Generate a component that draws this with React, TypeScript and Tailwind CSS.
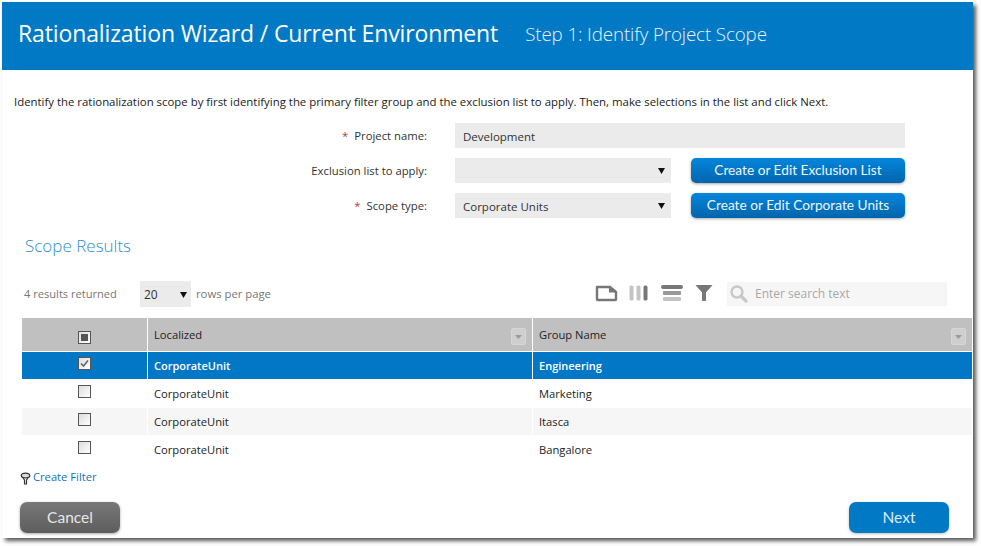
const seg = '"Open Sans", "Noto Sans", sans-serif';

function Caret() {
  return (
    <svg width="7" height="7" viewBox="0 0 7 7" className="shrink-0">
      <path d="M0 1h7L3.5 7z" fill="#111" />
    </svg>
  );
}

function Box({ checked, mixed }: { checked?: boolean; mixed?: boolean }) {
  return (
    <div className="w-[13px] h-[13px] border border-[#555] bg-gradient-to-br from-[#dcdcdc] to-white flex items-center justify-center">
      {mixed && <div className="w-[7px] h-[7px] bg-[#555]" />}
      {checked && (
        <svg width="9" height="9" viewBox="0 0 9 9">
          <path d="M1 4.5l2.5 2.5L8 1.5" fill="none" stroke="#666" strokeWidth="1.6" />
        </svg>
      )}
    </div>
  );
}

function SortBtn() {
  return (
    <div className="w-[15px] h-[17px] rounded-[2px] border border-[#d6d6d6] bg-[#cfcfcf] flex items-center justify-center">
      <svg width="7" height="4" viewBox="0 0 7 4">
        <path d="M0 0h7L3.5 4z" fill="#9a9a9a" />
      </svg>
    </div>
  );
}

const rows = [
  { g: "Engineering", h: "h-[27px]", pt: "pt-[5px]", tp: "pt-[1px]", bg: "bg-[#0277c6] text-white font-semibold text-[11px]" },
  { g: "Marketing", h: "h-[29px]", pt: "pt-[6px]", tp: "pt-[1px]", bg: "bg-white text-[#222]" },
  { g: "Itasca", h: "h-[27px]", pt: "pt-[5px]", tp: "pt-[1px]", bg: "bg-[#f6f6f6] text-[#222]" },
  { g: "Bangalore", h: "h-[28px]", pt: "pt-[6px]", tp: "pt-[2px]", bg: "bg-white text-[#222]" },
];

function FormRow({ label, req, children, cls }: { label: string; req?: boolean; children: React.ReactNode; cls: string }) {
  return (
    <div className={`flex items-center ${cls}`}>
      <div className="w-[425px] text-right text-[11.3px] text-[#333] pt-[1px]">
        {req && <span className="text-[#a8404a] mr-[6px]">*</span>}
        {label}
      </div>
      <div className="ml-[28px] flex items-center">{children}</div>
    </div>
  );
}

function Select({ value }: { value?: string }) {
  return (
    <div className="w-[216px] h-[25px] bg-[#ebebeb] flex items-center justify-between pl-[8px] pr-[6px] text-[11.5px] text-[#333]">
      <span className="pt-[2px]">{value}</span>
      <Caret />
    </div>
  );
}

function BlueBtn({ children }: { children: React.ReactNode }) {
  return (
    <div
      className="ml-[20px] w-[214px] h-[25px] pb-[1px] rounded-[5px] bg-gradient-to-b from-[#0586dc] to-[#0165ad] text-[#eef6fc] text-[13.7px] flex items-center justify-center shadow-[0_1px_3px_rgba(0,0,0,0.35)]"
      style={{ fontFamily: "Lato, sans-serif" }}
    >
      {children}
    </div>
  );
}

export default function App() {
  return (
    <div className="w-[981px] h-[546px] bg-white pl-[2px] pt-[2px] overflow-hidden" style={{ fontFamily: seg }}>
      <div className="w-[971px] h-[536px] bg-white shadow-[3px_3px_4px_rgba(0,0,0,0.65)] flex flex-col">
        <div className="h-[68px] bg-[#0279c4] flex items-center text-white pl-[16px] pb-[5px] shrink-0">
          <div className="text-[23px] tracking-[-0.13px]">Rationalization Wizard / Current Environment</div>
          <div className="ml-[27px] text-[18.8px] font-light text-[#e8f3fa] tracking-[-0.13px] pt-[2px]">Step 1: Identify Project Scope</div>
        </div>

        <div className="pl-[12px] pt-[24px] text-[11.4px] leading-[16px] text-[#222]">
          Identify the rationalization scope by first identifying the primary filter group and the exclusion list to apply. Then, make selections in the list and click Next.
        </div>

        <FormRow label="Project name:" req cls="mt-[13px]">
          <div className="w-[450px] h-[25px] bg-[#ebebeb] flex items-center pl-[8px] text-[11.5px] text-[#333]">
            <span className="pt-[2px]">Development</span>
          </div>
        </FormRow>
        <FormRow label="Exclusion list to apply:" cls="mt-[10px]">
          <Select />
          <BlueBtn>Create or Edit Exclusion List</BlueBtn>
        </FormRow>
        <FormRow label="Scope type:" req cls="mt-[10px]">
          <Select value="Corporate Units" />
          <BlueBtn>Create or Edit Corporate Units</BlueBtn>
        </FormRow>

        <div className="pl-[23px] mt-[16px] text-[17px] leading-[24px] font-light text-[#2f8fd0]">Scope Results</div>

        <div className="flex items-center h-[26px] mt-[23px] pl-[22px] pr-[26px]">
          <div className="text-[11.1px] text-[#777] w-[116px]">4 results returned</div>
          <div className="w-[51px] h-[26px] bg-[#ebebeb] flex items-center justify-between pl-[4px] pr-[4px] text-[12px] text-[#333]">
            <span className="pt-[2px]">20</span>
            <Caret />
          </div>
          <div className="ml-[5px] text-[11.3px] text-[#777]">rows per page</div>

          <div className="ml-auto flex items-center">
            <svg width="23" height="17" viewBox="0 0 23 17" className="mb-[2px]">
              <path d="M2 2h13l6 5v7.2a.8.8 0 0 1-.8.8H2.8a.8.8 0 0 1-.8-.8z" fill="none" stroke="#777" strokeWidth="2.4" strokeLinejoin="round" />
              <path d="M14 1.5l7.5 6H14z" fill="#777" />
            </svg>
            <svg width="20" height="16" viewBox="0 0 20 16" className="ml-[11px] mb-[2px]">
              <rect x="0.5" y="0.5" width="4" height="15" rx="1.5" fill="#c4c4c4" />
              <rect x="7.5" y="0.5" width="4" height="15" rx="1.5" fill="#c4c4c4" />
              <rect x="14.5" y="0.5" width="4" height="15" rx="1.5" fill="#777" />
            </svg>
            <svg width="22" height="16" viewBox="0 0 22 16" className="ml-[12px] mb-[2px]">
              <rect x="0" y="0" width="22" height="4" rx="2" fill="#777" />
              <rect x="2" y="6" width="18" height="4" rx="1" fill="#999" />
              <rect x="2" y="12" width="18" height="4" rx="1" fill="#c4c4c4" />
            </svg>
            <svg width="18" height="16" viewBox="0 0 18 16" className="ml-[12px] mb-[2px]">
              <path d="M0.5 0h17L11 7.5V14.5a1.5 1.5 0 0 1-4 0V7.5z" fill="#777" />
            </svg>
            <div className="ml-[14px] flex items-center w-[220px] h-[24px] bg-[#f6f6f6] pb-[1px]">
              <svg width="23" height="22" viewBox="0 0 23 22" className="shrink-0 ml-[1px]">
                <circle cx="9" cy="9" r="5.5" fill="none" stroke="#c8c8c8" strokeWidth="2.4" />
                <path d="M13 13l5 5" stroke="#c8c8c8" strokeWidth="3.2" strokeLinecap="round" />
              </svg>
              <span className="ml-[4px] text-[12px] text-[#a8a8a8]">Enter search text</span>
            </div>
          </div>
        </div>

        <div className="ml-[20px] mt-[11px] w-[950px] text-[11.2px]">
          <div className="flex h-[33px] bg-[#c0c0c0] text-[#222] mb-[1px]">
            <div className="w-[125px] flex items-center justify-center pt-[5px] border-r border-white box-content"><Box mixed /></div>
            <div className="flex-1 flex items-center justify-between pl-[6px] pr-[6px] border-r border-white">
              <span className="pt-[1px]">Localized</span>
              <div className="pt-[4px]"><SortBtn /></div>
            </div>
            <div className="w-[439px] flex items-center justify-between pl-[6px] pr-[6px]">
              <span className="pt-[1px]">Group Name</span>
              <div className="pt-[4px]"><SortBtn /></div>
            </div>
          </div>
          {rows.map((r) => (
            <div key={r.g} className={`flex ${r.h} ${r.bg}`}>
              <div className={`w-[125px] flex justify-center ${r.pt} box-content border-r border-white`}>
                <Box checked={r.g === "Engineering"} />
              </div>
              <div className={`flex-1 flex items-center pl-[6px] ${r.tp} border-r border-white`}>CorporateUnit</div>
              <div className={`w-[439px] flex items-center pl-[6px] ${r.tp}`}>{r.g}</div>
            </div>
          ))}
        </div>

        <div className="flex items-center ml-[18px] mt-[5px] h-[18px] text-[11.2px] text-[#1273b8]">
          <svg width="11" height="13" viewBox="0 0 11 13" className="mt-[3px]">
            <ellipse cx="5.5" cy="3.5" rx="4.3" ry="2.4" fill="#ddd" stroke="#333" strokeWidth="1.2" />
            <path d="M3 6l1.5 2v4h2V8L8 6" fill="none" stroke="#333" strokeWidth="1.2" />
          </svg>
          <span className="ml-[2px]">Create Filter</span>
        </div>

        <div className="flex justify-between ml-[18px] mr-[24px] mt-[16px]" style={{ fontFamily: "Lato, sans-serif" }}>
          <div className="w-[100px] h-[31px] rounded-[7px] bg-gradient-to-b from-[#787878] to-[#5d5d5d] text-[#e6e6e6] text-[15.5px] flex items-center justify-center shadow-[0_1px_3px_rgba(0,0,0,0.35)]">Cancel</div>
          <div className="w-[100px] h-[31px] rounded-[7px] bg-[#0279c4] text-[#dceefa] text-[15.5px] flex items-center justify-center shadow-[0_1px_3px_rgba(0,0,0,0.25)]">Next</div>
        </div>
      </div>
    </div>
  );
}
